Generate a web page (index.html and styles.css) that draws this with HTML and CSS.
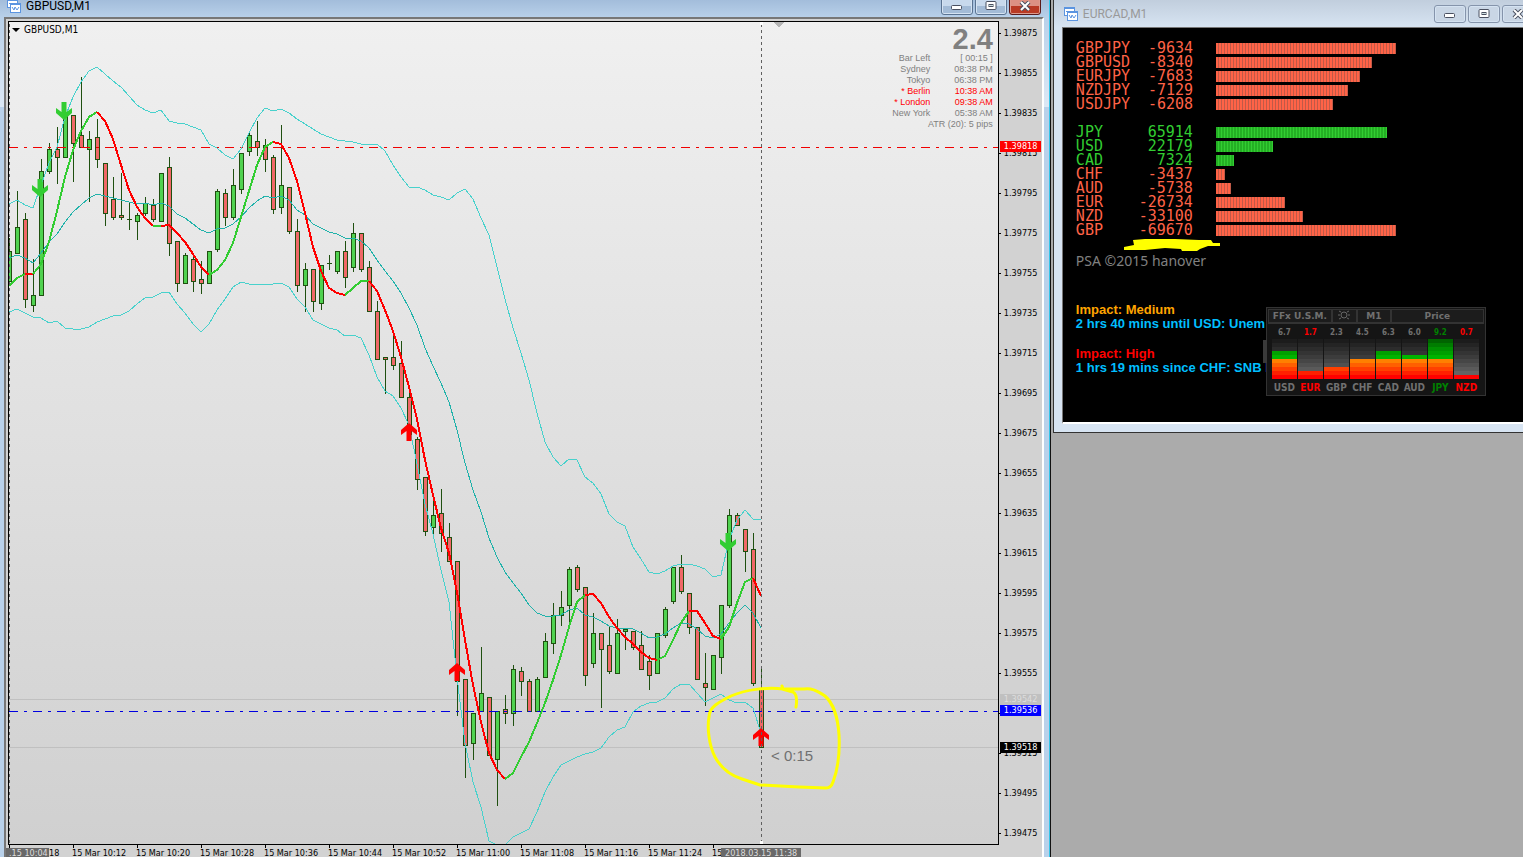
FILE: index.html
```html
<!DOCTYPE html>
<html lang="en">
<head>
  <meta charset="UTF-8" />
  <title>GBPUSD,M1</title>
  <meta name="viewport" content="width=device-width, initial-scale=1.0" />
  <link rel="stylesheet" href="styles.css">
</head>
<body>
  <svg class="defs" width="0" height="0" aria-hidden="true">
    <symbol id="icon-chart" viewBox="0 0 14 14">
      <rect x="0.5" y="0.5" width="10" height="8" fill="#fff" stroke="#5b94e0"/>
      <path d="M0 1h11" stroke="#5b94e0" stroke-width="2"/>
      <path d="M2 5l1-1 1 2 1-2" fill="none" stroke="#5b94e0"/>
      <rect x="3.5" y="4.5" width="10" height="9" fill="#fff" stroke="#5b94e0"/>
      <path d="M3 5h11" stroke="#5b94e0" stroke-width="2"/>
      <path d="M5 8l2 3 1-3 2 3 2-3" fill="none" stroke="#5b94e0"/>
    </symbol>
    <symbol id="icon-min" viewBox="0 0 12 10">
      <rect x="0.5" y="4.5" width="10" height="4" rx="1" fill="#fff" stroke="#4a5060"/>
    </symbol>
    <symbol id="icon-max" viewBox="0 0 12 10">
      <rect x="1" y="0.5" width="10" height="8" rx="1" fill="#fff" stroke="#4a5060"/>
      <rect x="4" y="3.5" width="4" height="2" fill="#cdd" stroke="#4a5060"/>
    </symbol>
    <symbol id="icon-close" viewBox="0 0 12 10">
      <path d="M2 1l8 8M10 1l-8 8" stroke="#4a5060" stroke-width="4"/>
      <path d="M2 1l8 8M10 1l-8 8" stroke="#fff" stroke-width="2"/>
    </symbol>
    <symbol id="arrow-up" viewBox="0 0 16 18">
      <path d="M8 0l8 7v5l-5.5-4v10h-5V8L0 12V7z"/>
    </symbol>
    <symbol id="arrow-down" viewBox="0 0 16 18">
      <path d="M8 18l8-7V6l-5.500 4V0h-5v10L0 6v5z"/>
    </symbol>
  </svg>

  <main class="workspace">
    <section class="window window-chart">
      <header class="titlebar">
        <svg class="title-icon"><use href="#icon-chart"/></svg>
        <h1>GBPUSD,M1</h1>
        <div class="win-buttons">
          <button type="button" aria-label="Minimize"><svg><use href="#icon-min"/></svg></button>
          <button type="button" aria-label="Maximize"><svg><use href="#icon-max"/></svg></button>
          <button type="button" class="close" aria-label="Close"><svg><use href="#icon-close"/></svg></button>
        </div>
      </header>

      <div class="chart">
        <div class="plot">
          <svg id="plotArea">
            <g id="scene" transform="translate(0 -22)"></g>
          </svg>
          <div class="symbol-label"><span class="caret"></span>GBPUSD,M1</div>
          <div class="clock">
            <div class="spread">2.4</div>
            <table>
              <tr><td>Bar Left</td><td>[ 00:15 ]</td></tr>
              <tr><td>Sydney</td><td>08:38 PM</td></tr>
              <tr><td>Tokyo</td><td>06:38 PM</td></tr>
              <tr class="open"><td>* Berlin</td><td>10:38 AM</td></tr>
              <tr class="open"><td>* London</td><td>09:38 AM</td></tr>
              <tr><td>New York</td><td>05:38 AM</td></tr>
            </table>
            <div class="atr">ATR (20): 5 pips</div>
          </div>
        </div>
        <div class="price-axis">
          <div id="prices"></div>
          <span class="tag tag-bid">1.39542</span>
          <span class="tag tag-red">1.39818</span>
          <span class="tag tag-blue">1.39536</span>
          <span class="tag tag-last">1.39518</span>
        </div>
        <div class="time-axis">
          <div id="times"></div>
          <span class="tag tag-start">.15 10:04</span>
          <span class="tag tag-now">2018.03.15 11:38</span>
        </div>
      </div>
    </section>

    <section class="window window-psa">
      <header class="titlebar">
        <svg class="title-icon"><use href="#icon-chart"/></svg>
        <h1>EURCAD,M1</h1>
        <div class="win-buttons">
          <button type="button" aria-label="Minimize"><svg><use href="#icon-min"/></svg></button>
          <button type="button" aria-label="Maximize"><svg><use href="#icon-max"/></svg></button>
          <button type="button" aria-label="Close"><svg><use href="#icon-close"/></svg></button>
        </div>
      </header>

      <div class="psa">
        <table class="strength"><tbody id="pairs"></tbody></table>
        <table class="strength"><tbody id="currencies"></tbody></table>
        <svg class="marker" width="96" height="14">
          <path d="M9 3l12-1h30l24 1 12 0 2 3 7 0v3l-12 0-8 3-3 2H58l-1-2-16-1-20 2H0v-3l10-2z" fill="#ff0"/>
        </svg>
        <p class="credit">PSA ©2015 hanover</p>

        <div class="news">
          <p class="medium">Impact: Medium</p>
          <p>2 hrs 40 mins until USD: Unem</p>
        </div>
        <div class="news">
          <p class="high">Impact: High</p>
          <p>1 hrs 19 mins since CHF: SNB L</p>
        </div>

        <div class="meter">
          <div class="meter-head">
            <span class="name">FFx U.S.M.</span>
            <span class="sun">
              <svg width="14" height="10" viewBox="0 0 14 10" fill="none" stroke="#666">
                <circle cx="7" cy="5" r="3"/>
                <path d="M1 5h2M11 5h2M2 1l2 1M12 1l-2 1M2 9l2-1M12 9l-2-1"/>
              </svg>
            </span>
            <span class="tf">M1</span>
            <span class="mode">Price</span>
          </div>
          <div class="meter-cols" id="meter"></div>
        </div>
      </div>
    </section>
  </main>

  <script src="chart.js"></script>
</body>
</html>
```
FILE: styles.css
```css
:root {
  --frame: #b9d1ea;
  --frame-idle: #d7e4f2;
  --panel: #d2d2d2;
  --up: #32cd32;
  --down: #ff6347;
  --axis-font: 'DejaVu Sans Condensed', 'DejaVu Sans', sans-serif;
}

* {
  box-sizing: border-box;
}

body {
  margin: 0;
  height: 100vh;
  overflow: hidden;
  background: #ababab;
  font-family: 'Liberation Sans', sans-serif;
}

h1, p {
  margin: 0;
}

.defs {
  position: absolute;
}

.workspace {
  display: flex;
  align-items: flex-start;
  gap: 2px;
  height: 100%;
}

/* windows */
.window {
  display: flex;
  flex-direction: column;
}

.window-chart {
  width: 69%;
  height: 100%;
  padding: 0 6px 0 4px;
  background: linear-gradient(#a3bddb, #b9d1ea 18px, #dce8f5 107px, var(--frame) 107px);
  border-right: 1px solid #111;
  box-shadow: inset -1px 0 #35c5e8;
}

.window-psa {
  flex: 1;
  margin-right: -19px;
  padding: 0 8px 8px;
  background: linear-gradient(#c1cedd, var(--frame-idle) 27px);
  border-left: 1px solid #333;
  border-bottom: 1px solid #333;
}

.titlebar {
  display: flex;
  align-items: center;
  flex: none;
}

.titlebar h1 {
  flex: 1;
  font-family: Roboto, 'Open Sans', sans-serif;
  font-size: 12px;
  font-weight: normal;
  line-height: 14px;
}

.title-icon {
  width: 14px;
  height: 14px;
  margin: 0 5px 0 3px;
}

.window-chart .titlebar {
  height: 17px;
  padding: 0 3px 6px 0;
}

.window-psa .titlebar {
  height: 27px;
  padding-top: 1px;
}

.window-psa .title-icon {
  margin-left: 2px;
}

.window-psa h1 {
  color: #999;
}

.win-buttons {
  display: flex;
  gap: 2px;
}

.win-buttons button {
  width: 32px;
  height: 18px;
  padding: 0;
  border: 1px solid #5a7391;
  border-radius: 3px;
  background: linear-gradient(#c8d9ec 50%, #a3bbd6 50%);
  box-shadow: inset 0 0 0 1px #d5e3f2;
  line-height: 0;
}

.window-psa .win-buttons button {
  border-color: #8594ab;
  background: #c9d6e5;
}

.win-buttons svg {
  width: 12px;
  height: 10px;
}

.win-buttons .close {
  border-color: #5a1a1a;
  background: linear-gradient(#dc9183 50%, #b93a24 50%);
  box-shadow: inset 0 0 0 1px #dd9a8c;
}

/* chart */
.chart {
  flex: 1;
  min-height: 0;
  display: grid;
  grid-template-columns: 1fr 43px;
  grid-template-rows: 1fr 12px;
  padding: 2px 0 0 2px;
  border-top: 2px solid #777;
  border-left: 2px solid #777;
  border-right: 2px solid #fff;
  background: var(--panel);
}

.plot {
  position: relative;
  min-height: 0;
  border: 1px solid #000;
  background: linear-gradient(#f0f0f0, #d0d0d0);
}

#plotArea {
  display: block;
  width: 100%;
  height: 100%;
  shape-rendering: crispEdges;
}

#plotArea .smooth {
  shape-rendering: auto;
}

#plotArea text {
  font-size: 15px;
  fill: #707070;
}

.symbol-label {
  position: absolute;
  top: 2px;
  left: 3px;
  display: flex;
  align-items: center;
  gap: 4px;
  font-family: var(--axis-font);
  font-size: 10px;
  line-height: 12px;
}

.caret {
  border: 4px solid transparent;
  border-top-color: #000;
  border-bottom: 0;
}

.clock {
  position: absolute;
  top: 3px;
  right: 5px;
  color: #808080;
  font-size: 9px;
  line-height: 11px;
  text-align: right;
}

.spread {
  font-size: 29px;
  font-weight: bold;
  line-height: 28px;
}

.clock table {
  margin-left: auto;
  border-collapse: collapse;
}

.clock td {
  padding: 0 0 0 24px;
}

.clock .open {
  color: #f00;
}

/* axes */
.price-axis,
.time-axis {
  position: relative;
  font-family: var(--axis-font);
  font-size: 9px;
}

#prices {
  display: flex;
  flex-direction: column;
  gap: 24px;
  padding-top: 4px;
}

#prices span {
  display: flex;
  align-items: center;
  height: 16px;
}

#prices span::before {
  content: "";
  width: 2px;
  height: 1px;
  margin-right: 3px;
  background: #000;
}

.tag {
  position: absolute;
  left: 1px;
  width: 41px;
  padding-left: 4px;
  line-height: 11px;
  color: #fff;
  white-space: nowrap;
}

.tag-bid {
  top: 673px;
  background: #c0c0c0;
  color: #ddd;
}

.tag-red {
  top: 120px;
  background: #f00;
}

.tag-blue {
  top: 684px;
  background: #00f;
}

.tag-last {
  top: 721px;
  background: #000;
}

.time-axis {
  grid-column: 1 / -1;
  height: 12px;
}

#times {
  display: flex;
  height: 12px;
  overflow: hidden;
}

#times span {
  flex: none;
  width: 64px;
  padding-top: 2px;
  line-height: 12px;
  white-space: nowrap;
  background: linear-gradient(#000, #000) 1px 0 / 1px 3px no-repeat;
}

.tag-start,
.tag-now {
  top: 3px;
  background: #696969;
  color: #ddd;
}

.tag-start {
  left: -2px;
  width: 43px;
  padding-left: 3px;
}

.tag-now {
  left: 713px;
  width: 80px;
}

/* strength panel */
.psa {
  position: relative;
  height: 397px;
  padding: 13px 0 0 13px;
  border: 1px solid #777;
  border-bottom: 2px solid #fff;
  background: #000;
  overflow: hidden;
}

.strength {
  border-collapse: collapse;
  margin-bottom: 14px;
  font-family: 'DejaVu Sans Mono', monospace;
  font-size: 15px;
  line-height: 14px;
}

.strength td {
  padding: 0;
  height: 14px;
}

.strength td:nth-child(1) {
  width: 54px;
}

.strength td:nth-child(2) {
  width: 63px;
  text-align: right;
}

.strength td:nth-child(3) {
  padding-left: 23px;
}

.strength .up {
  color: var(--up);
}

.strength .down {
  color: var(--down);
}

.bar {
  display: block;
  height: 11px;
  background: repeating-linear-gradient(90deg, var(--down) 0 2px, #c05a48 2px 3px);
}

.up .bar {
  background: repeating-linear-gradient(90deg, #24b024 0 2px, var(--up) 2px 3px);
}

.marker {
  position: absolute;
  top: 209px;
  left: 61px;
}

.credit {
  color: #808080;
  font-family: 'Noto Sans', sans-serif;
  font-size: 14px;
  line-height: 20px;
  margin-bottom: 32px;
}

.news {
  margin-bottom: 16px;
  color: #00bfff;
  font-size: 13px;
  font-weight: bold;
  line-height: 14px;
}

.news .medium {
  color: #ffa500;
}

.news .high {
  color: #f00;
}

/* currency meter floating over the news lines */
.meter {
  position: absolute;
  top: 279px;
  left: 203px;
  width: 220px;
  height: 89px;
  padding: 1px;
  border: 1px solid #333;
  background: #151515;
  color: #707070;
  font-family: 'DejaVu Sans', sans-serif;
  font-weight: bold;
  font-size: 9px;
}

.meter::before {
  content: "";
  position: absolute;
  top: 32px;
  left: -4px;
  width: 4px;
  height: 23px;
  background: #3a3a3a;
}

.meter-head {
  display: flex;
  height: 15px;
  border-bottom: 1px solid #333;
}

.meter-head span {
  height: 14px;
  border: 1px solid #333;
  background: #1c1c1c;
  line-height: 12px;
  text-align: center;
}

.meter-head .name {
  width: 64px;
}

.meter-head .sun {
  width: 25px;
}

.meter-head .tf {
  width: 34px;
}

.meter-head .mode {
  flex: 1;
}

.meter-cols {
  display: flex;
  gap: 1px;
  padding: 3px 0 0 4px;
}

.col {
  width: 25px;
  text-align: center;
  font-family: 'DejaVu Sans Condensed', 'DejaVu Sans', sans-serif;
  font-size: 10px;
  line-height: 17px;
}

.col .value {
  display: block;
  font-size: 8px;
  line-height: 12px;
}

.col .cells {
  display: flex;
  align-items: flex-end;
  height: 40px;
  background: linear-gradient(#1c1c1c 0 4px, #242424 0 8px, #2c2c2c 0 12px, #343434 0 16px, #3c3c3c 0 20px,
    #464646 0 24px, #505050 0 28px, #5a5a5a 0 32px, #646464 0 36px, #707070 0);
}

.col .fill {
  width: 100%;
  background: linear-gradient(to top, #f00 0 4px, #ff2000 0 8px, #ff4000 0 12px, #ff6000 0 16px, #ff8000 0 20px,
    #00b400 0 24px, #00a000 0 28px, #009000 0 32px, #007c00 0 36px, #006400 0);
}

.col.weak {
  color: #f00;
}

.col.strong {
  color: #008000;
}
```
FILE: chart.js
```js
// one bar every 8px: [high, top, bottom, low, up]
const bars = [
  [238,251,281,283,1],[191,227,253,253,1],[213,219,299,307,0],[259,295,305,311,1],[159,171,295,295,1],
  [143,149,171,173,1],[127,149,157,183,0],[115,115,157,157,1],[115,115,143,181,0],[77,135,147,147,0],
  [131,139,149,201,1],[119,137,159,167,0],[163,163,213,225,0],[177,199,217,219,0],[173,215,217,219,0],
  [203,219,219,229,1],[213,215,221,239,1],[197,203,213,215,1],[199,205,219,221,0],[173,173,221,221,1],
  [157,167,243,255,0],[241,241,283,291,0],[253,255,283,283,1],[257,259,281,291,0],[261,279,283,293,0],
  [251,251,283,283,1],[189,191,249,251,1],[189,193,217,225,0],[169,185,217,219,1],[153,153,189,193,1],
  [133,135,151,155,1],[121,141,147,155,0],[139,145,159,171,0],[155,157,209,213,0],[125,185,207,213,1],
  [187,187,231,233,0],[219,231,285,291,0],[263,269,285,311,1],[269,269,301,311,0],[265,265,303,309,1],
  [255,263,263,269,1],[251,251,271,273,1],[241,251,277,287,0],[223,233,267,271,1],[233,233,269,271,0],
  [261,267,311,311,0],[301,311,359,359,0],[357,357,359,393,0],[334,357,365,369,0],[341,363,397,397,0],
  [389,397,437,437,0],[437,439,479,489,0],[477,477,531,535,0],[499,515,527,533,1],[489,513,533,551,0],
  [523,537,561,561,0],[561,561,681,715,0],[679,679,745,777,0],[713,713,743,759,1],[647,693,711,711,1],
  [697,697,755,755,0],[711,711,759,805,1],[695,709,713,723,0],[665,669,713,725,1],[667,671,681,695,0],
  [679,681,711,711,0],[677,679,711,711,1],[633,641,677,677,1],[603,615,643,653,1],[591,607,615,625,1],
  [567,569,605,621,1],[565,567,589,591,0],[587,587,675,685,0],[613,633,663,667,1],[633,633,649,707,0],
  [627,645,671,673,0],[619,633,673,673,1],[629,629,631,649,1],[631,631,647,649,0],[631,645,669,669,0],
  [655,661,675,689,0],[633,633,673,673,1],[607,609,635,637,1],[567,567,601,603,1],[555,567,591,593,0],
  [593,593,627,633,0],[627,627,679,679,0],[653,683,687,705,0],[655,655,689,689,1],[605,605,657,673,1],
  [509,515,605,607,1],[513,515,525,525,0],[529,529,551,571,0],[533,549,683,685,0],[667,689,747,747,0]
];

const upper = [204,200,205,208,185,163,147,117,97,82,71,67,74,81,87,96,105,110,113,110,121,123,124,127,130,144,148,155,159,149,
  133,118,108,111,109,113,119,124,129,134,137,140,141,142,144,144,144,151,165,177,187,187,190,195,197,200,193,189,199,218,
  235,267,299,328,353,380,413,442,457,466,459,460,477,483,494,514,522,526,547,559,572,574,571,566,564,564,566,569,577,575,
  540,520,510,519,520];

const middle = [258,255,258,263,253,242,234,222,212,205,198,194,196,198,200,202,204,203,205,203,206,214,218,224,230,233,229,228,224,217,
  208,201,196,198,196,200,210,215,224,228,232,234,238,238,241,248,260,271,281,293,308,325,348,366,383,402,430,463,490,512,
  538,557,572,583,593,605,613,616,616,615,610,608,615,617,621,626,628,628,629,633,638,637,634,628,623,624,629,636,638,634,
  623,613,605,613,628];

const lower = [312,309,313,317,318,323,321,328,329,329,327,322,319,316,315,311,304,298,297,293,292,304,313,324,332,324,310,299,287,282,
  284,285,284,284,283,287,299,307,320,324,328,330,336,335,338,355,377,391,396,408,425,464,504,534,570,602,677,743,782,807,
  841,845,845,837,833,829,812,792,777,765,761,757,754,752,748,737,730,727,712,706,703,702,698,689,684,684,693,702,698,694,
  700,703,702,708,733];

const average = [286,278,274,274,264,242,211,177,150,131,117,112,121,139,165,190,207,218,226,226,225,233,242,254,267,275,270,260,243,217,
  191,165,147,142,144,158,181,213,247,271,288,293,295,288,281,281,291,310,331,357,387,419,460,495,528,553,592,640,685,722,
  753,770,779,773,757,742,723,703,680,655,627,602,595,594,603,617,628,637,644,652,658,660,656,640,623,611,611,623,636,639,
  627,603,582,578,596];

// bar indexes where the average changes colour, green first
const turns = [0,2,3,11,18,19,25,33,42,45,62,72,81,85,89,93,94];

const line = (data, from, to) =>
  'M' + data.slice(from, to + 1).map((y, i) => (from + i) * 8 + ' ' + y).join('L');

let svg = '';

// price levels
svg += '<path d="M0 699.5h2000M0 747.5h2000" stroke="#c0c0c0"/>';

bars.forEach(([high, top, bottom, low, up], i) => {
  const x = i * 8;
  svg += `<path d="M${x + 0.5} ${high}V${low + 1}" stroke="#1f5010"/>`;
  if (top === bottom) {
    svg += `<path d="M${x - 2} ${top + 0.5}h5" stroke="#1f5010"/>`;
  } else {
    svg += `<rect x="${x - 1.5}" y="${top + 0.5}" width="4" height="${bottom - top}" fill="${up ? '#50d250' : '#f06868'}" stroke="#1f5010"/>`;
  }
});

svg += '<path d="M0 147.5h2000" stroke="#f00000" stroke-dasharray="9 6 3 6"/>';
svg += '<path d="M0 711.5h2000" stroke="#0000e0" stroke-dasharray="9 6 3 6"/>';

svg += `<path d="${line(upper, 0, 94)}" fill="none" stroke="#48d1cc"/>`;
svg += `<path d="${line(lower, 0, 94)}" fill="none" stroke="#48d1cc"/>`;
svg += `<path d="${line(middle, 0, 94)}" fill="none" stroke="#20b2aa"/>`;

for (let i = 0; i < turns.length - 1; i++) {
  svg += `<path d="${line(average, turns[i], turns[i + 1])}" fill="none" stroke="${i % 2 ? '#ff0000' : '#32cd32'}" stroke-width="2"/>`;
}

[[47, 102], [23, 179], [711, 533]].forEach(([x, y]) => {
  svg += `<use class="smooth" href="#arrow-down" x="${x}" y="${y}" width="16" height="18" fill="#32cd32"/>`;
});
[[392, 423], [440, 663], [744, 728]].forEach(([x, y]) => {
  svg += `<use class="smooth" href="#arrow-up" x="${x}" y="${y}" width="16" height="18" fill="#ff0000"/>`;
});

// period separators and shift mark
svg += '<path d="M0.5 24V845M752.5 24V845" stroke="#606060" stroke-dasharray="3 3"/>';
svg += '<path d="M751 22h3v3h-3zM751 841h3v3h-3z" fill="#fff"/>';
svg += '<path d="M764 22h11l-5 5z" fill="#b4b4b4"/>';

svg += '<text x="762" y="761">&lt; 0:15</text>';
svg += '<path class="smooth" d="M773 686l1 3C760 687 738 689 722 696C710 702 700 707 700 717C698 728 700 745 706 757C712 768 720 775 733 779L751 785L790 787L817 788Q822 788 824 782C829 769 831 755 830 735C829 718 824 703 816 696C807 690 802 688 795 689L773 689L784 692Q789 695 787 707" fill="none" stroke="#ffff00" stroke-width="3" stroke-linecap="round"/>';

document.getElementById('scene').innerHTML = svg;

// axes
let prices = '';
for (let p = 139875; p >= 139475; p -= 20) {
  prices += `<span>${(p / 100000).toFixed(5)}</span>`;
}
document.getElementById('prices').innerHTML = prices;

let times = '<span>15 Mar 2018</span>';
for (let m = 612; m <= 692; m += 8) {
  times += `<span>15 Mar ${Math.floor(m / 60)}:${String(m % 60).padStart(2, '0')}</span>`;
}
document.getElementById('times').innerHTML = times;

// strength tables: name, value, number of strokes
function fillStrength(id, rows) {
  document.getElementById(id).innerHTML = rows.map(([name, value, n]) =>
    `<tr class="${value > 0 ? 'up' : 'down'}"><td>${name}</td><td>${value}</td><td><span class="bar" style="width:${n * 3}px"></span></td></tr>`
  ).join('');
}

fillStrength('pairs', [
  ['GBPJPY', -9634, 60], ['GBPUSD', -8340, 52], ['EURJPY', -7683, 48], ['NZDJPY', -7129, 44], ['USDJPY', -6208, 39]
]);
fillStrength('currencies', [
  ['JPY', 65914, 57], ['USD', 22179, 19], ['CAD', 7324, 6], ['CHF', -3437, 3],
  ['AUD', -5738, 5], ['EUR', -26734, 23], ['NZD', -33100, 29], ['GBP', -69670, 60]
]);

document.getElementById('meter').innerHTML = [
  ['USD', '6.7', 7, ''], ['EUR', '1.7', 2, 'weak'], ['GBP', '2.3', 3, ''], ['CHF', '4.5', 5, ''],
  ['CAD', '6.3', 7, ''], ['AUD', '6.0', 6, ''], ['JPY', '9.2', 10, 'strong'], ['NZD', '0.7', 1, 'weak']
].map(([name, value, n, cls]) =>
  `<div class="col ${cls}"><span class="value">${value}</span><div class="cells"><div class="fill" style="height:${n * 4}px"></div></div>${name}</div>`
).join('');
```
